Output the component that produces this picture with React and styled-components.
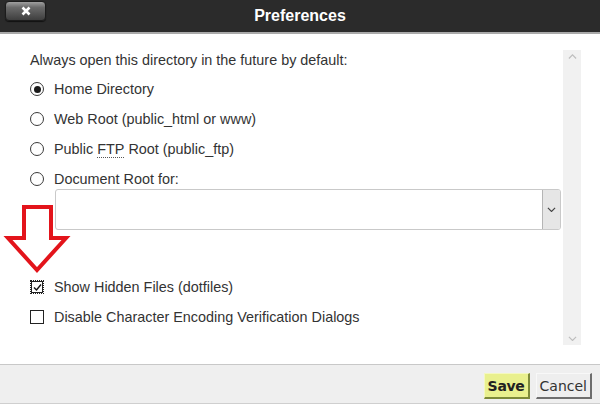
import React, { useState } from 'react';
import styled, { createGlobalStyle } from 'styled-components';

const GlobalStyle = createGlobalStyle`
  html, body {
    margin: 0;
    padding: 0;
    background: #ffffff;
  }
  body {
    font-family: "Liberation Sans", Arial, sans-serif;
  }
`;

const Dialog = styled.div`
  position: relative;
  display: flex;
  flex-direction: column;
  width: 600px;
  height: 405px;
  overflow: hidden;
  background: #ffffff;
`;

const TitleBar = styled.div`
  position: relative;
  display: flex;
  align-items: center;
  justify-content: center;
  height: 32px;
  flex: none;
  background: #2b2b2b;
  border-bottom: 2px solid #a9a9a9;
`;

const Title = styled.h1`
  margin: 0;
  font-family: "Liberation Sans", Arial, sans-serif;
  font-size: 16px;
  font-weight: bold;
  color: #ffffff;
`;

const CloseButton = styled.button`
  position: absolute;
  left: 5px;
  top: 1px;
  width: 41px;
  height: 20px;
  padding: 0;
  display: flex;
  align-items: center;
  justify-content: center;
  border: 1px solid #1c1c1c;
  border-radius: 4px;
  background: linear-gradient(#a0a0a0 0%, #6a6a6a 30%, #3e3e3e 100%);
  box-shadow: 0 1px 1px rgba(0, 0, 0, 0.6);
`;

const Body = styled.div`
  flex: 1;
  display: flex;
  padding: 16px 19px 19px 30px;
  min-height: 0;
`;

const Content = styled.div`
  flex: 1;
  display: flex;
  flex-direction: column;
  color: #333333;
  font-size: 14.4px;
`;

const Prompt = styled.div`
  line-height: 20px;
  margin-bottom: 9px;
`;

const OptionList = styled.div`
  display: flex;
  flex-direction: column;
  gap: 10px;
`;

const Option = styled.label`
  display: flex;
  align-items: center;
  height: 20px;
  line-height: 20px;
  gap: 10px;
  cursor: pointer;
`;

const Radio = styled.span`
  position: relative;
  flex: none;
  width: 12px;
  height: 12px;
  border: 1px solid #3a3a3a;
  border-radius: 50%;
  background: #ffffff;

  &::after {
    content: '';
    display: ${p => (p.$checked ? 'block' : 'none')};
    position: absolute;
    left: 2.5px;
    top: 2.5px;
    width: 7px;
    height: 7px;
    border-radius: 50%;
    background: #1a1a1a;
  }
`;

const Check = styled.span`
  flex: none;
  display: flex;
  align-items: center;
  justify-content: center;
  width: 12px;
  height: 12px;
  border: 1px ${p => (p.$checked ? 'dotted' : 'solid')} #222222;
  background: #ffffff;
  box-shadow: ${p => (p.$checked ? 'inset 0 0 0 1px #222' : 'none')};
`;

const Abbr = styled.abbr`
  text-decoration: none;
  border-bottom: 1px dotted #555555;
  line-height: 14px;
`;

const SelectBox = styled.div`
  display: flex;
  height: 39px;
  margin-left: 25px;
  border: 1px solid #c9c9c9;
  border-radius: 3px;
  background: #ffffff;
`;

const SelectValue = styled.div`
  flex: 1;
`;

const SelectToggle = styled.div`
  width: 17px;
  display: flex;
  align-items: center;
  justify-content: center;
  background: #e6e6e6;
  border-left: 1px solid #b5b5b5;
  border-radius: 0 2px 2px 0;
`;

const CheckList = styled.div`
  display: flex;
  flex-direction: column;
  gap: 10px;
  margin-top: 47px;
`;

const Scrollbar = styled.div`
  flex: none;
  width: 18px;
  margin-left: 2px;
  display: flex;
  flex-direction: column;
  justify-content: space-between;
  align-items: center;
  padding: 4px 0;
  background: #f1f1f1;
`;

const Footer = styled.div`
  flex: none;
  height: 40px;
  display: flex;
  justify-content: flex-end;
  align-items: flex-start;
  gap: 6px;
  padding: 8px 8px 0 0;
  box-sizing: border-box;
  background: #efefef;
  border-top: 1px solid #c8c8c8;
  border-bottom: 1px solid #cfcfcf;
  margin-bottom: 1px;
`;

const FooterButton = styled.button`
  height: 26px;
  padding: 0 ${p => (p.$primary ? '3px' : '3px')};
  font-family: "DejaVu Sans", Verdana, sans-serif;
  font-size: 14px;
  font-weight: ${p => (p.$primary ? 'bold' : 'normal')};
  letter-spacing: ${p => (p.$primary ? '-0.3px' : '0')};
  color: ${p => (p.$primary ? '#222222' : '#333333')};
  background: ${p => (p.$primary ? '#e9f08e' : '#eeeeee')};
  border: 1px solid;
  border-color: ${p =>
    p.$primary
      ? '#f4f8c0 #7d8a3a #7d8a3a #f4f8c0'
      : '#f8f8f8 #6e6e6e #6e6e6e #f8f8f8'};
  border-width: 1px 2px 2px 1px;
`;

const Annotation = styled.svg`
  position: absolute;
  left: 0;
  top: 200px;
  pointer-events: none;
`;

const Chevron = ({ up, color = '#555', size = 10 }) => (
  <svg width={size} height={size * 0.6} viewBox="0 0 10 6">
    <path
      d={up ? 'M1 5 L5 1 L9 5' : 'M1 1 L5 5 L9 1'}
      fill="none"
      stroke={color}
      strokeWidth="1.3"
    />
  </svg>
);

const options = [
  { id: 'home', label: 'Home Directory' },
  { id: 'web', label: 'Web Root (public_html or www)' },
  {
    id: 'ftp',
    label: (
      <>
        Public&nbsp;<Abbr title="File Transfer Protocol">FTP</Abbr>&nbsp;Root (public_ftp)
      </>
    ),
  },
  { id: 'docroot', label: 'Document Root for:' },
];

export default function App() {
  const [dir, setDir] = useState('home');
  const [hidden, setHidden] = useState(true);
  const [noEncoding, setNoEncoding] = useState(false);

  return (
    <>
      <GlobalStyle />
      <Dialog>
        <TitleBar>
          <CloseButton aria-label="Close">
            <svg width="10" height="10" viewBox="0 0 10 10">
              <path d="M1.5 1.5 L8.5 8.5 M8.5 1.5 L1.5 8.5" stroke="#ffffff" strokeWidth="2.6" />
            </svg>
          </CloseButton>
          <Title>Preferences</Title>
        </TitleBar>
        <Body>
          <Content>
            <Prompt>Always open this directory in the future by default:</Prompt>
            <OptionList>
              {options.map(option => (
                <Option key={option.id} onClick={() => setDir(option.id)}>
                  <Radio $checked={dir === option.id} />
                  <span>{option.label}</span>
                </Option>
              ))}
            </OptionList>
            <SelectBox>
              <SelectValue />
              <SelectToggle>
                <Chevron color="#444" size={9} />
              </SelectToggle>
            </SelectBox>
            <CheckList>
              <Option onClick={() => setHidden(!hidden)}>
                <Check $checked={hidden}>
                  {hidden && (
                    <svg width="9" height="9" viewBox="0 0 9 9">
                      <path d="M1 4.5 L3.5 7 L8 1.5" fill="none" stroke="#111" strokeWidth="1.4" />
                    </svg>
                  )}
                </Check>
                <span>Show Hidden Files (dotfiles)</span>
              </Option>
              <Option onClick={() => setNoEncoding(!noEncoding)}>
                <Check $checked={noEncoding} />
                <span>Disable Character Encoding Verification Dialogs</span>
              </Option>
            </CheckList>
          </Content>
          <Scrollbar>
            <Chevron up color="#bdbdbd" size={9} />
            <Chevron color="#bdbdbd" size={9} />
          </Scrollbar>
        </Body>
        <Footer>
          <FooterButton $primary>Save</FooterButton>
          <FooterButton>Cancel</FooterButton>
        </Footer>
        <Annotation width="80" height="80" viewBox="0 0 80 80">
          <polygon
            points="24,7 51,7 51,38 66,38 37,70 8,38 24,38"
            fill="none"
            stroke="#e3141b"
            strokeWidth="4"
            strokeLinejoin="miter"
          />
        </Annotation>
      </Dialog>
    </>
  );
}
